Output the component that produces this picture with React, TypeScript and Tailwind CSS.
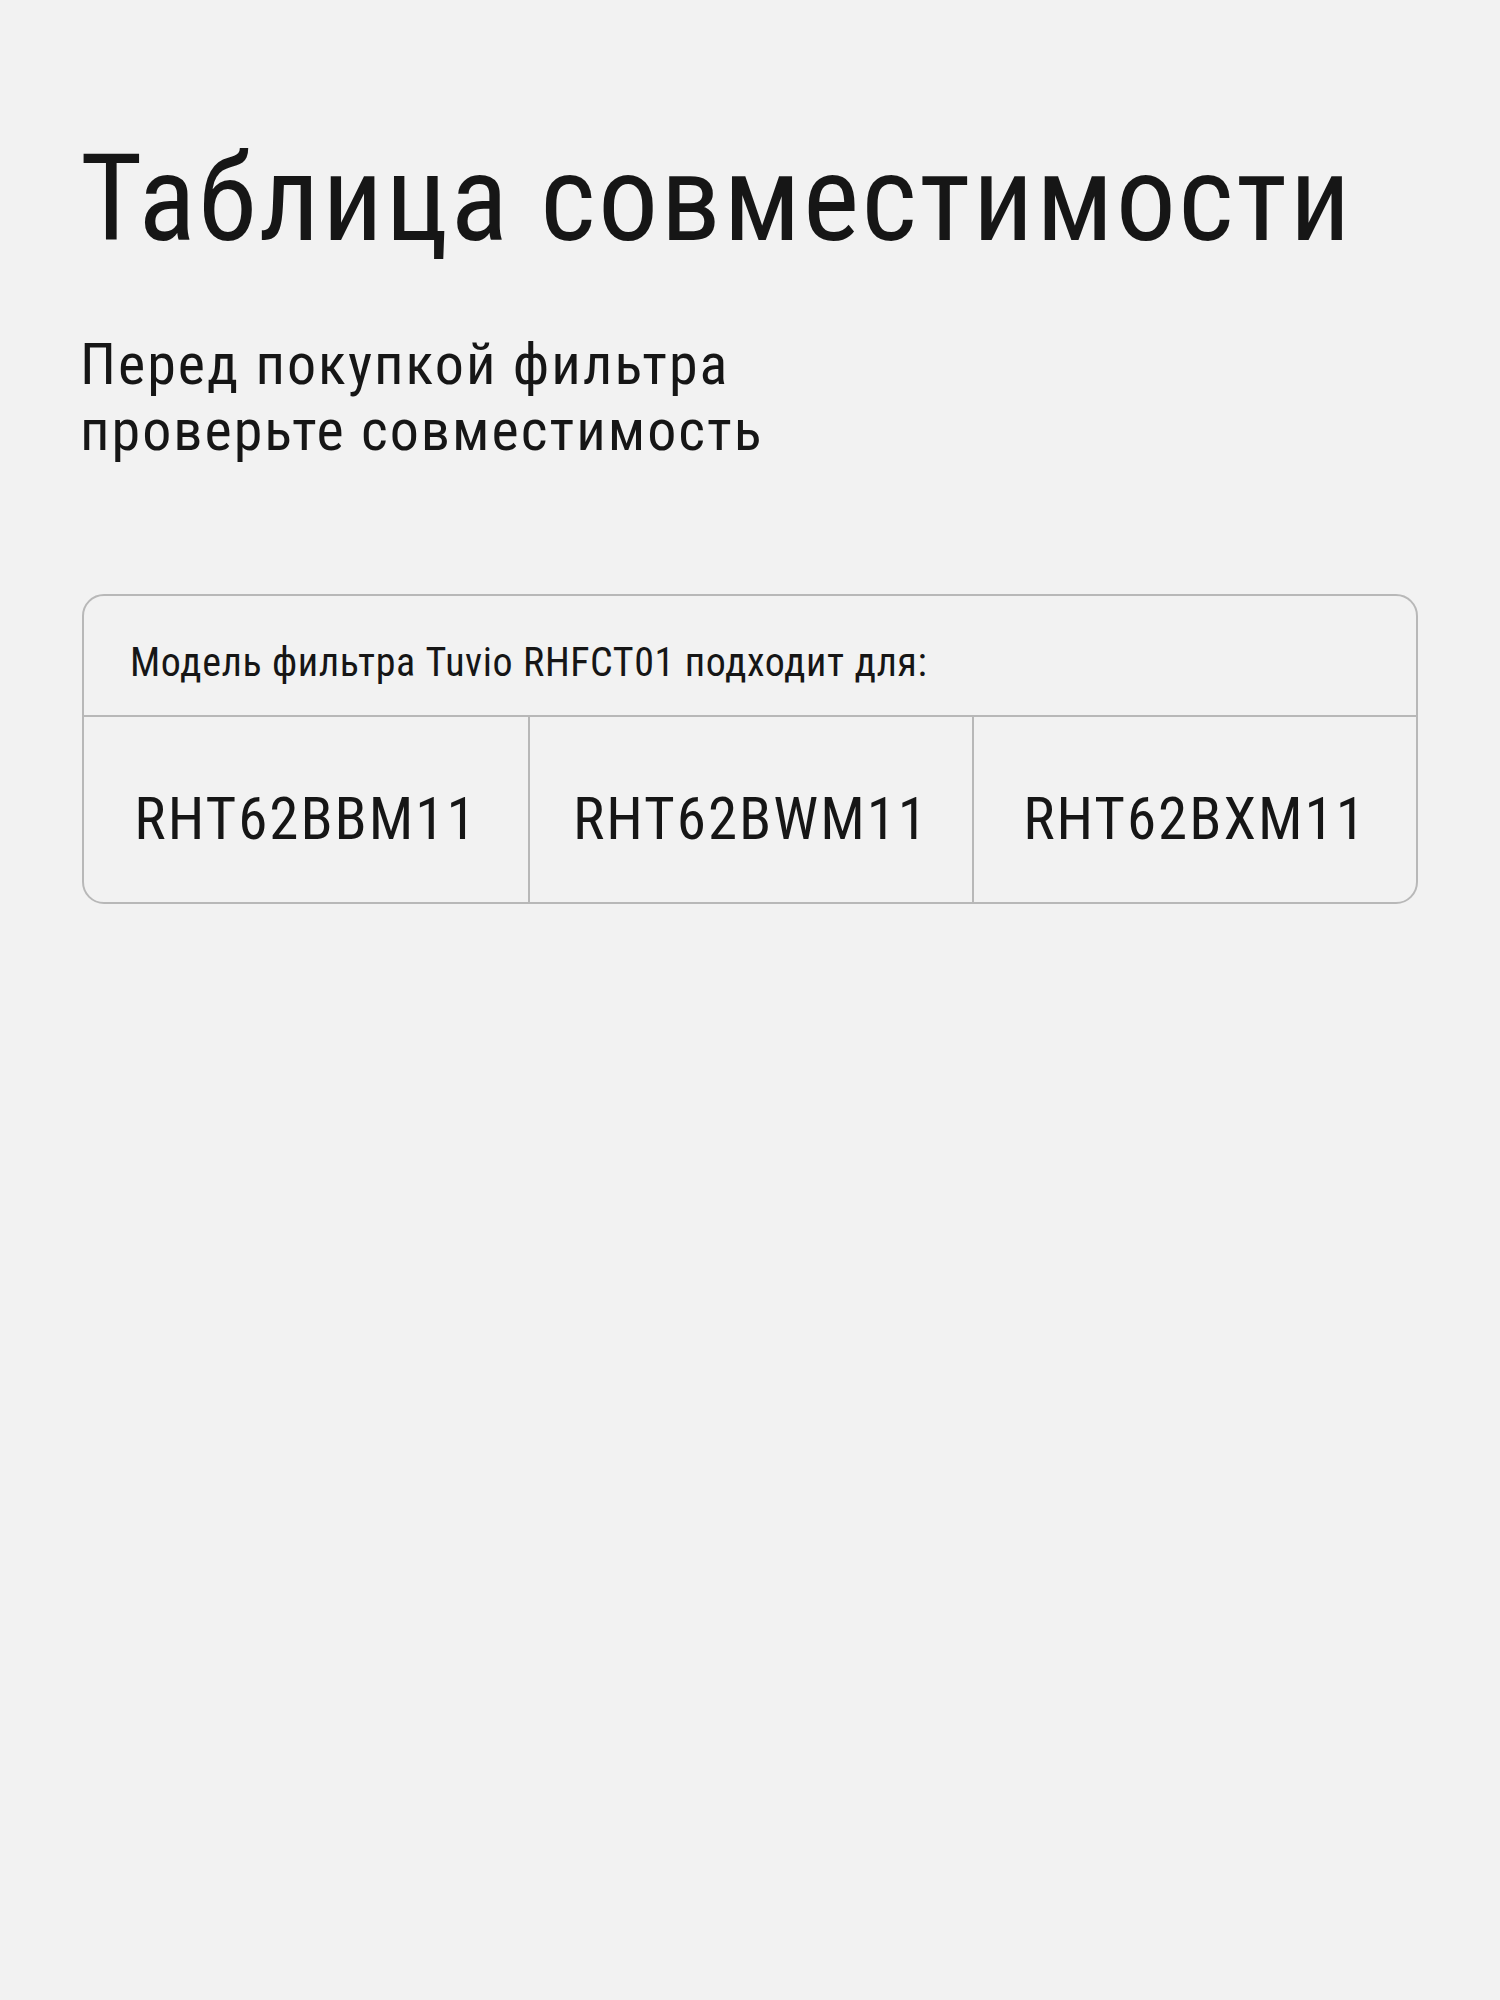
const MODELS = ['RHT62BBM11', 'RHT62BWM11', 'RHT62BXM11'];

export default function App() {
  return (
    <div className="min-h-[2000px] w-full bg-[#f2f2f2] px-[80px] pt-[139px] text-[#161616] font-['Roboto',sans-serif]">
      <h1 className="text-[120px] leading-[1] font-normal font-stretch-condensed tracking-[2.3px] whitespace-nowrap">
        Таблица совместимости
      </h1>
      <p className="mt-[72px] text-[58px] leading-[66px] font-stretch-condensed tracking-[2px]">
        Перед покупкой фильтра
        <br />
        проверьте совместимость
      </p>
      <div className="mt-[131px] ml-[2px] w-[1336px] rounded-[22px] border-2 border-[#b8b8b8] overflow-hidden">
        <div className="px-[46px] pt-[47px] pb-[32px] text-[40px] leading-[40px] font-stretch-condensed tracking-[0.6px] border-b-2 border-[#b8b8b8]">
          Модель фильтра Tuvio RHFCT01 подходит для:
        </div>
        <div className="grid grid-cols-3">
          {MODELS.map((model, i) => (
            <div
              key={model}
              className={`h-[185px] pt-[72px] text-center text-[59px] leading-[1] font-stretch-condensed tracking-[2px] ${i > 0 ? 'border-l-2 border-[#b8b8b8]' : ''}`}
            >
              {model}
            </div>
          ))}
        </div>
      </div>
    </div>
  );
}
